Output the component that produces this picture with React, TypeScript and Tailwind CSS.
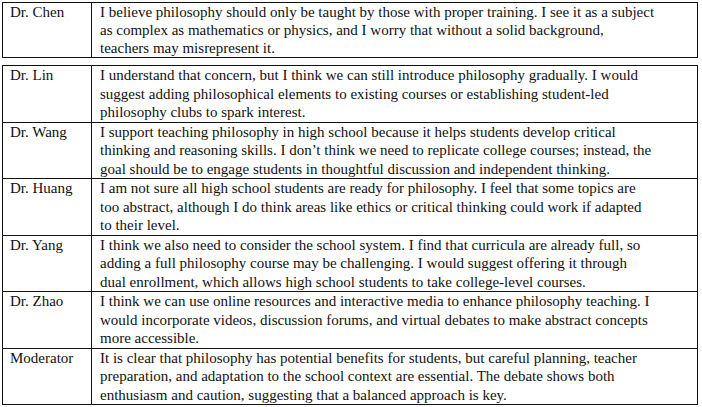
const first = [
  {
    name: "Dr. Chen",
    lines: [
      "I believe philosophy should only be taught by those with proper training. I see it as a subject",
      "as complex as mathematics or physics, and I worry that without a solid background,",
      "teachers may misrepresent it.",
    ],
  },
];

const rest = [
  {
    name: "Dr. Lin",
    lines: [
      "I understand that concern, but I think we can still introduce philosophy gradually. I would",
      "suggest adding philosophical elements to existing courses or establishing student-led",
      "philosophy clubs to spark interest.",
    ],
  },
  {
    name: "Dr. Wang",
    lines: [
      "I support teaching philosophy in high school because it helps students develop critical",
      "thinking and reasoning skills. I don\u2019t think we need to replicate college courses; instead, the",
      "goal should be to engage students in thoughtful discussion and independent thinking.",
    ],
  },
  {
    name: "Dr. Huang",
    lines: [
      "I am not sure all high school students are ready for philosophy. I feel that some topics are",
      "too abstract, although I do think areas like ethics or critical thinking could work if adapted",
      "to their level.",
    ],
  },
  {
    name: "Dr. Yang",
    lines: [
      "I think we also need to consider the school system. I find that curricula are already full, so",
      "adding a full philosophy course may be challenging. I would suggest offering it through",
      "dual enrollment, which allows high school students to take college-level courses.",
    ],
  },
  {
    name: "Dr. Zhao",
    lines: [
      "I think we can use online resources and interactive media to enhance philosophy teaching. I",
      "would incorporate videos, discussion forums, and virtual debates to make abstract concepts",
      "more accessible.",
    ],
  },
  {
    name: "Moderator",
    lines: [
      "It is clear that philosophy has potential benefits for students, but careful planning, teacher",
      "preparation, and adaptation to the school context are essential. The debate shows both",
      "enthusiasm and caution, suggesting that a balanced approach is key.",
    ],
  },
];

// one bordered block of speaker rows
function Block({ rows, lh }: { rows: typeof rest; lh: string }) {
  return (
    <div className="w-[696px] border border-[#111]">
      {rows.map((r, i) => (
        <div
          key={r.name}
          className={`flex ${lh} ${i > 0 ? "border-t border-[#111]" : ""}`}
        >
          <div className="w-[89px] shrink-0 pl-[7px] border-r border-[#111] whitespace-nowrap">
            {r.name}
          </div>
          <div className="pl-[8px] whitespace-nowrap">
            {r.lines.map((l, j) => (
              <p key={j}>{l}</p>
            ))}
          </div>
        </div>
      ))}
    </div>
  );
}

export default function App() {
  return (
    <div
      className="w-[702px] h-[407px] bg-white overflow-hidden pl-[2px] pt-[2px] text-[15px] text-[#111]"
      style={{ fontFamily: "'Liberation Serif', 'Times New Roman', Times, serif" }}
    >
      <Block rows={first} lh="leading-[18px]" />
      <div className="h-[7px]" />
      <Block rows={rest} lh="leading-[18.5px]" />
    </div>
  );
}
